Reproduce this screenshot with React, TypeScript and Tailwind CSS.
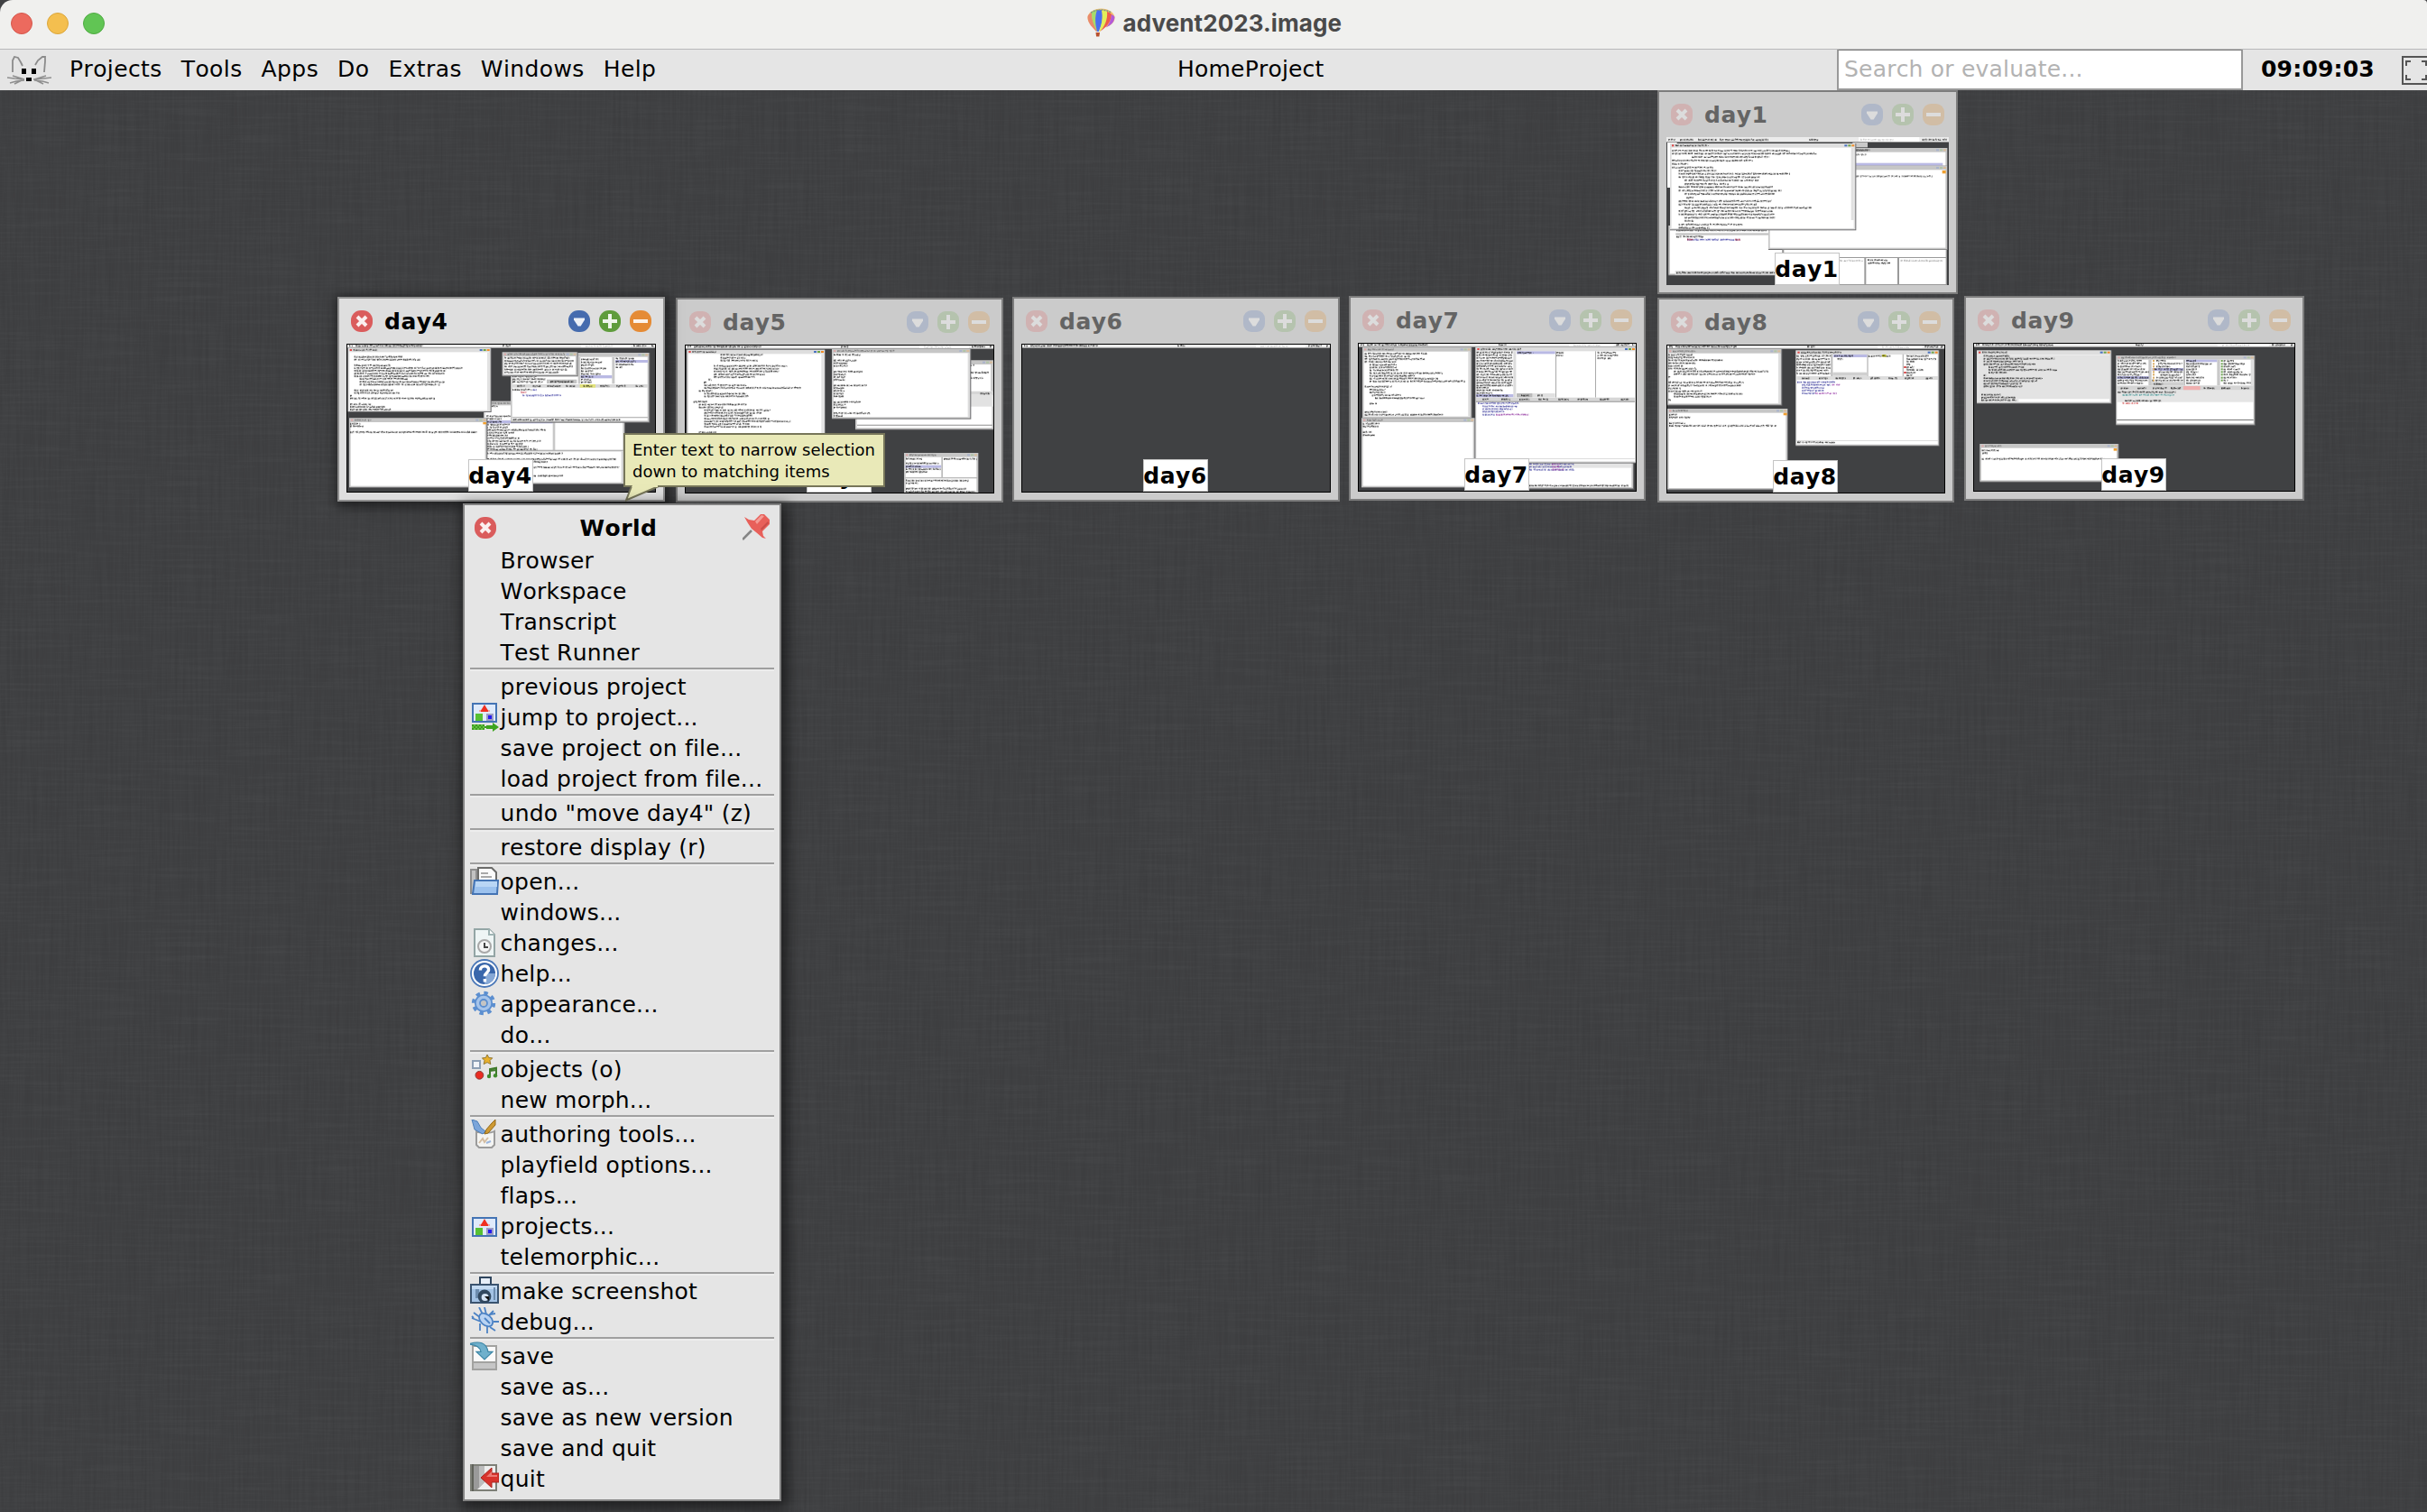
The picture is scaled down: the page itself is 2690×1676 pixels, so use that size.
import React from "react";

type Seg = [number, number, number];

/* Splits a row of tiny unreadable text into irregular strokes */
function strokes(x: number, y: number, w: number, seed: number, max: number, gap: number, jitter: number) {
  let s = (seed * 7919 + 13) % 65521;
  const next = () => {
    s = (s * 171 + 11213) % 65521;
    return s / 65521;
  };
  let d = "";
  let p = x;
  while (p < x + w) {
    const len = Math.min(2 + next() * max, x + w - p);
    d += `M${p.toFixed(1)} ${(y + (next() - 0.5) * jitter).toFixed(1)}h${len.toFixed(1)}`;
    p += len + 1 + next() * gap;
  }
  return d;
}

function Text({ rows, c = "#111" }: { rows: Seg[]; c?: string }) {
  return (
    <g stroke={c} fill="none">
      {rows.map(([x, y, w], i) => {
        const seed = Math.round(x * 3 + y * 7 + w + i);
        return (
          <g key={i}>
            <path d={strokes(x, y, w, seed, 14, 5, 1)} strokeWidth={7} opacity={0.2} />
            <path d={strokes(x, y, w, seed + 5, 7, 6, 3)} strokeWidth={3} opacity={0.62} />
            <path d={strokes(x, y, w, seed + 9, 2, 11, 5)} strokeWidth={4} opacity={0.5} />
          </g>
        );
      })}
    </g>
  );
}

function R({ b, f }: { b: [number, number, number, number]; f: string }) {
  return <rect x={b[0]} y={b[1]} width={b[2]} height={b[3]} fill={f} />;
}

function Mini({ b, on, title = 80, side = 5 }: { b: [number, number, number, number]; on?: boolean; title?: number; side?: number }) {
  const [x, y, w, h] = b;
  return (
    <g>
      <R b={[x, y, w + 3, h + 3]} f="#6d6d6f" />
      <R b={[x, y, w, h]} f={on ? "#dedede" : "#c6c6c6"} />
      <R b={[x + side, y + 14, w - side * 2, h - 18]} f="#fff" />
      <R b={[x + 6, y + 4, 7, 6]} f={on ? "#e04848" : "#dba9a9"} />
      <Text rows={[[x + 18, y + 7, title]]} c={on ? "#222" : "#666"} />
      <R b={[x + w - 36, y + 4, 9, 6]} f={on ? "#4a73c0" : "#aab4cc"} />
      <R b={[x + w - 24, y + 4, 9, 6]} f={on ? "#6da548" : "#b0c4a6"} />
      <R b={[x + w - 12, y + 4, 9, 6]} f={on ? "#f08c28" : "#d8bd9c"} />
    </g>
  );
}

function Bar({ x, y, w }: { x: number; y: number; w: number }) {
  return (
    <g>
      <R b={[x, y, w, 9]} f="#ececec" />
      <R b={[x, y + 9, w, 3]} f="#9a9a9a" />
      <R b={[x + w * 0.76, y, w * 0.16, 9]} f="#fff" />
      <Text rows={[[x + 6, y + 4, 12], [x + 28, y + 4, w * 0.22], [x + w * 0.505, y + 4, 26]]} />
      <Text rows={[[x + w * 0.775, y + 5, 90]]} c="#bbb" />
      <Text rows={[[x + w * 0.93, y + 4, 44], [x + w - 12, y + 4, 8]]} />
    </g>
  );
}

function Day4() {
  return (
    <svg className="block size-full" viewBox="75 186 1023 489" preserveAspectRatio="none">
      <Bar x={75} y={186} w={1023} />
      <Mini b={[528, 374, 468, 274]} />
      <R b={[530, 436, 236, 102]} f="#fff" />
      <R b={[536, 438, 222, 10]} f="#b9b9e4" />
      <R b={[758, 444, 8, 94]} f="#c8c8c8" />
      <R b={[532, 536, 462, 5]} f="#b4b4b4" />
      <R b={[986, 541, 8, 106]} f="#d4d4d4" />
      <Text rows={[[545, 391, 30], [538, 424, 80], [538, 433, 50], [538, 443, 50], [538, 452, 76], [538, 461, 70], [538, 470, 196], [538, 479, 92], [538, 488, 70], [538, 497, 110], [538, 507, 180], [538, 516, 120], [538, 525, 140], [538, 534, 170], [540, 548, 252], [540, 567, 430], [690, 576, 50], [695, 594, 284], [695, 622, 100]]} />
      <Mini b={[618, 213, 460, 230]} title={180} />
      <R b={[624, 318, 450, 11]} f="#d8d8d8" />
      <R b={[848, 318, 52, 11]} f="#e2e27a" />
      <R b={[850, 288, 106, 10]} f="#b9b9e4" />
      <R b={[966, 237, 108, 9]} f="#b9b9e4" />
      <R b={[955, 228, 9, 88]} f="#c9c9c9" />
      <R b={[842, 228, 8, 88]} f="#c9c9c9" />
      <R b={[738, 302, 100, 13]} f="#c4c4c4" />
      <R b={[624, 426, 450, 4]} f="#bbb" />
      <Text rows={[[852, 235, 60], [852, 245, 70], [852, 254, 44], [852, 265, 86], [852, 274, 40], [852, 284, 66], [852, 293, 40], [852, 303, 34], [852, 311, 36], [968, 232, 60], [968, 242, 66], [968, 252, 60], [968, 261, 22], [624, 292, 80], [624, 301, 110], [624, 310, 100], [640, 324, 24], [692, 324, 26], [740, 324, 44], [802, 324, 30], [860, 324, 30], [916, 324, 30], [970, 324, 30], [1034, 324, 28], [624, 336, 64], [626, 436, 356], [750, 309, 76]]} />
      <Text rows={[[652, 345, 18]]} c="#c03040" />
      <Text rows={[[692, 336, 12], [658, 355, 128]]} c="#3838a0" />
      <Mini b={[590, 211, 249, 78]} title={190} />
      <Text rows={[[598, 230, 216], [598, 240, 230], [598, 249, 222], [598, 259, 226], [598, 269, 210], [598, 278, 180]]} />
      <Mini b={[77, 197, 474, 211]} on />
      <R b={[540, 212, 9, 194]} f="#e2e2e2" />
      <Text rows={[[98, 227, 160], [98, 236, 220], [98, 255, 120], [98, 264, 360], [98, 273, 306], [98, 282, 300], [98, 291, 250], [116, 300, 160], [116, 310, 282], [116, 319, 266], [98, 338, 130], [98, 347, 150], [84, 356, 6], [84, 365, 282], [84, 384, 70], [84, 393, 116], [84, 402, 136]]} />
      <Mini b={[81, 430, 457, 230]} title={55} />
      <R b={[526, 444, 11, 7]} f="#f0a030" />
      <Text rows={[[84, 449, 34], [84, 458, 44], [84, 477, 422]]} />
    </svg>
  );
}

function Day5() {
  return (
    <svg className="block size-full" viewBox="90 189 1023 489" preserveAspectRatio="none">
      <Bar x={90} y={189} w={1023} />
      <Mini b={[654, 238, 459, 229]} title={150} />
      <R b={[1036, 341, 77, 12]} f="#d6d6d6" />
      <R b={[1036, 353, 77, 39]} f="#e2e2e2" />
      <R b={[660, 452, 450, 4]} f="#aaa" />
      <R b={[1104, 252, 6, 88]} f="#ccc" />
      <Text rows={[[1036, 255, 14], [1038, 279, 60], [1036, 297, 42], [1070, 349, 30]]} />
      <Mini b={[576, 200, 460, 231]} title={190} />
      <R b={[1028, 214, 7, 214]} f="#dcdcdc" />
      <Text rows={[[582, 220, 90], [582, 239, 76], [582, 248, 46], [582, 257, 46], [582, 276, 96], [582, 285, 40], [582, 294, 38], [582, 303, 38], [582, 322, 110], [582, 331, 36], [582, 340, 36], [582, 349, 34], [582, 358, 34], [582, 377, 90], [582, 386, 40], [582, 395, 44], [582, 414, 122], [582, 423, 30]]} />
      <Mini b={[94, 203, 458, 330]} on />
      <R b={[541, 217, 8, 270]} f="#e4e4e4" />
      <Text rows={[[206, 220, 140], [206, 230, 84], [206, 239, 124], [184, 257, 244], [184, 266, 216], [184, 275, 216], [184, 285, 170], [184, 294, 136], [166, 303, 10], [150, 312, 8], [152, 321, 140], [152, 330, 322], [134, 340, 44], [152, 349, 140], [152, 358, 148], [116, 376, 46], [134, 385, 158], [134, 395, 80], [152, 404, 220], [152, 413, 190], [152, 422, 160], [152, 432, 216], [152, 441, 288], [152, 450, 150], [152, 459, 190], [134, 478, 58]]} />
      <R b={[88, 530, 480, 150]} f="#404143" />
      <Mini b={[816, 546, 246, 132]} title={90} />
      <R b={[820, 587, 120, 9]} f="#b9b9e4" />
      <R b={[940, 560, 5, 68]} f="#bbb" />
      <R b={[820, 627, 240, 4]} f="#bbb" />
      <Text rows={[[822, 566, 54], [948, 566, 110], [822, 581, 110], [822, 591, 50], [822, 600, 116], [822, 609, 72], [822, 638, 210], [822, 647, 40], [822, 665, 200], [822, 675, 230]]} />
    </svg>
  );
}

function Day6() {
  return (
    <svg className="block size-full" viewBox="69 186 1023 489" preserveAspectRatio="none">
      <Bar x={69} y={186} w={1023} />
    </svg>
  );
}

function Day7() {
  return (
    <svg className="block size-full" viewBox="78 183 921 489" preserveAspectRatio="none">
      <Bar x={78} y={183} w={921} />
      <Mini b={[560, 560, 430, 104]} />
      <R b={[640, 582, 344, 14]} f="#e4e4e4" />
      <Text rows={[[645, 583, 150], [645, 592, 140], [645, 602, 150]]} c="#38389a" />
      <Text rows={[[720, 583, 26], [722, 592, 24], [722, 602, 38]]} c="#a030a0" />
      <Text rows={[[645, 655, 330]]} />
      <Mini b={[90, 195, 362, 234]} title={86} />
      <R b={[442, 210, 8, 214]} f="#dadada" />
      <Text rows={[[98, 216, 208], [98, 225, 150], [98, 234, 200], [98, 243, 106], [114, 253, 90], [114, 262, 90], [114, 271, 94], [114, 281, 242], [114, 290, 150], [114, 299, 228], [114, 308, 318], [98, 326, 90], [114, 336, 54], [114, 345, 52], [122, 354, 96], [132, 364, 164], [114, 382, 24], [98, 410, 74], [98, 419, 260]]} />
      <Mini b={[87, 430, 376, 230]} title={52} />
      <Text rows={[[92, 449, 54], [92, 458, 52], [92, 477, 30], [92, 487, 40]]} />
      <Mini b={[466, 194, 533, 384]} on title={134} side={3} />
      <R b={[592, 208, 9, 154]} f="#dcdcdc" />
      <R b={[732, 208, 3, 154]} f="#aaa" />
      <R b={[864, 208, 3, 154]} f="#aaa" />
      <R b={[603, 208, 128, 9]} f="#b9b9e4" />
      <R b={[468, 351, 124, 10]} f="#b9b9e4" />
      <R b={[603, 348, 128, 13]} f="#e0e0e0" />
      <R b={[603, 348, 52, 13]} f="#b9b9b9" />
      <R b={[468, 362, 528, 12]} f="#d6d6d6" />
      <R b={[468, 374, 528, 3]} f="#888" />
      <R b={[468, 564, 528, 3]} f="#ddd" />
      <Text rows={[212, 221, 230, 240, 249, 258, 267, 276, 286, 295, 304, 313, 322].map((y, i) => [470, y, i % 3 ? 118 : 121] as Seg)} />
      <Text rows={[[470, 329, 40], [470, 338, 86], [470, 347, 52], [470, 356, 106], [606, 213, 52], [736, 213, 24], [736, 222, 22], [872, 213, 62], [872, 222, 68], [872, 232, 46], [618, 355, 26], [672, 355, 18], [490, 368, 20], [552, 368, 30], [612, 368, 34], [676, 368, 34], [742, 368, 34], [806, 368, 34], [880, 368, 30], [950, 368, 26]]} />
      <Text rows={[[474, 381, 136], [490, 391, 114], [490, 400, 100], [490, 409, 74], [490, 419, 40]]} c="#303098" />
      <Text rows={[[534, 419, 110]]} c="#8c2a9c" />
    </svg>
  );
}

function Day1() {
  return (
    <svg className="block size-full" viewBox="81 186 939 492" preserveAspectRatio="none">
      <R b={[81, 186, 939, 15]} f="#ececec" />
      <R b={[81, 201, 939, 3]} f="#909090" />
      <R b={[720, 186, 202, 15]} f="#fff" />
      <Text rows={[[88, 195, 22], [126, 195, 44], [186, 195, 62], [258, 195, 162], [556, 195, 30], [932, 195, 62], [1000, 195, 14]]} />
      <Text rows={[[726, 195, 110]]} c="#bbb" />
      <R b={[84, 204, 32, 150]} f="#fff" />
      <R b={[700, 204, 50, 16]} f="#c9c9c9" />
      <Mini b={[680, 222, 334, 90]} title={60} />
      <R b={[700, 272, 300, 9]} f="#b9b9e4" />
      <Mini b={[88, 480, 382, 164]} />
      <R b={[112, 505, 320, 7]} f="#c4c4c4" />
      <R b={[110, 630, 350, 14]} f="#ddd" />
      <Text rows={[[114, 496, 300], [114, 517, 90], [114, 637, 330]]} />
      <Text rows={[[150, 527, 176]]} c="#2a2a9c" />
      <Text rows={[[150, 527, 20], [310, 527, 16]]} c="#b02030" />
      <Mini b={[420, 281, 594, 277]} />
      <R b={[998, 297, 12, 10]} f="#f0a030" />
      <Text rows={[[712, 316, 254], [710, 230, 40], [712, 244, 34]]} c="#333" />
      <R b={[466, 559, 548, 119]} f="#9a9a9a" />
      <R b={[472, 561, 538, 24]} f="#fff" />
      <R b={[472, 588, 267, 87]} f="#fff" />
      <R b={[745, 588, 104, 87]} f="#fff" />
      <R b={[855, 588, 155, 87]} f="#fff" />
      <Text rows={[[750, 595, 68], [752, 605, 76]]} />
      <Text rows={[[658, 597, 76], [860, 597, 140]]} c="#999" />
      <Mini b={[93, 207, 616, 286]} on title={110} />
      <R b={[695, 222, 9, 240]} f="#e0e0e0" />
      <Text rows={[[100, 231, 390], [100, 241, 480], [166, 252, 258], [100, 264, 268], [100, 275, 54], [100, 287, 138], [122, 298, 126], [122, 308, 370], [122, 319, 270], [142, 330, 246], [142, 342, 146], [122, 352, 312], [122, 364, 342], [142, 375, 300], [148, 387, 24], [122, 399, 310], [122, 410, 260], [142, 421, 422], [122, 432, 312], [122, 443, 318], [142, 454, 300], [142, 465, 30], [122, 477, 212], [122, 488, 102]]} />
    </svg>
  );
}

function Day8() {
  return (
    <svg className="block size-full" viewBox="84 879 921 489" preserveAspectRatio="none">
      <Bar x={84} y={879} w={921} />
      <Mini b={[84, 891, 379, 185]} title={76} />
      <R b={[453, 906, 8, 166]} f="#dedede" />
      <Text rows={[[88, 910, 80], [88, 919, 86], [88, 928, 180], [88, 938, 90], [88, 947, 50], [88, 956, 94], [106, 965, 314], [106, 974, 270], [88, 984, 8], [88, 1002, 250], [88, 1012, 240], [88, 1022, 40], [88, 1031, 112], [106, 1040, 228], [106, 1049, 124], [88, 1060, 8]]} />
      <Mini b={[84, 1089, 399, 268]} title={50} />
      <R b={[470, 1103, 12, 8]} f="#f0a030" />
      <Text rows={[[90, 1109, 26], [90, 1118, 70], [90, 1137, 54], [90, 1146, 356]]} />
      <Mini b={[511, 895, 475, 316]} on title={134} side={3} />
      <R b={[628, 908, 6, 74]} f="#bbb" />
      <R b={[748, 908, 4, 74]} f="#bbb" />
      <R b={[866, 908, 4, 74]} f="#bbb" />
      <R b={[636, 909, 112, 9]} f="#b9b9e4" />
      <R b={[634, 968, 114, 12]} f="#d0d0d0" />
      <R b={[798, 909, 14, 8]} f="#e2e240" />
      <R b={[514, 981, 470, 12]} f="#dcdcdc" />
      <R b={[514, 1194, 470, 3]} f="#ddd" />
      <Text rows={[[514, 914, 114], [514, 924, 110], [514, 934, 112], [514, 943, 114], [514, 953, 112], [514, 962, 106], [514, 972, 112], [640, 914, 62], [650, 924, 18], [752, 914, 74], [880, 914, 74], [880, 924, 98], [880, 933, 26], [880, 942, 12], [880, 951, 24], [880, 960, 56], [880, 969, 30], [880, 978, 18], [532, 988, 24], [588, 988, 30], [644, 988, 34], [702, 988, 28], [760, 988, 30], [820, 988, 28], [874, 988, 30], [944, 988, 22], [516, 1201, 126]]} />
      <Text rows={[[516, 1001, 126], [532, 1010, 96], [532, 1020, 76], [532, 1029, 72], [532, 1038, 44]]} c="#303098" />
      <Text rows={[[632, 1010, 26], [576, 1038, 72]]} c="#9a3aa8" />
      <R b={[871, 948, 7, 6]} f="#d03a3a" />
      <R b={[871, 966, 7, 6]} f="#d03a3a" />
    </svg>
  );
}

function Day9() {
  return (
    <svg className="block size-full" viewBox="84 183 1065 489" preserveAspectRatio="none">
      <Bar x={84} y={183} w={1065} />
      <Mini b={[93, 205, 446, 175]} on title={84} />
      <R b={[98, 220, 436, 147]} f="#e3e3e3" />
      <R b={[98, 367, 134, 10]} f="#e3e3e3" />
      <Text rows={[[116, 224, 88], [116, 233, 236], [116, 242, 130], [116, 251, 172], [132, 261, 118], [132, 270, 228], [132, 279, 62], [116, 288, 8], [116, 298, 196], [116, 307, 180], [116, 316, 126], [116, 325, 128], [108, 353, 64], [108, 362, 114], [108, 371, 116]]} />
      <Mini b={[556, 222, 460, 230]} title={180} side={3} />
      <R b={[664, 236, 10, 86]} f="#c8c8c8" />
      <R b={[780, 236, 6, 86]} f="#bbb" />
      <R b={[892, 236, 10, 86]} f="#c8c8c8" />
      <R b={[1004, 236, 8, 86]} f="#dcdcdc" />
      <R b={[788, 236, 104, 8]} f="#b9b9e4" />
      <R b={[676, 264, 104, 9]} f="#b9b9e4" />
      <R b={[559, 291, 106, 9]} f="#b9b9e4" />
      <R b={[672, 310, 112, 12]} f="#cfcfcf" />
      <R b={[559, 322, 454, 16]} f="#d4d4d4" />
      <R b={[780, 324, 56, 13]} f="#efb0b0" />
      <R b={[559, 338, 454, 39]} f="#e5e5e5" />
      <R b={[559, 435, 454, 3]} f="#777" />
      <Text rows={[[562, 240, 80], [562, 249, 94], [562, 259, 80], [562, 268, 90], [562, 277, 104], [562, 286, 78], [562, 296, 104], [562, 305, 100], [562, 314, 84], [690, 240, 32], [696, 249, 80], [690, 259, 46], [684, 268, 94], [698, 277, 80], [704, 287, 66], [690, 296, 86], [676, 305, 102], [682, 317, 30], [790, 240, 32], [790, 250, 84], [790, 259, 44], [790, 268, 34], [790, 277, 40], [790, 286, 32], [790, 296, 58], [790, 305, 46], [790, 314, 44], [914, 240, 34], [914, 250, 70], [914, 259, 40], [914, 268, 54], [914, 277, 62], [914, 286, 90], [914, 296, 44], [914, 305, 14], [914, 314, 90], [572, 331, 26], [628, 331, 28], [678, 331, 46], [738, 331, 34], [848, 331, 36], [906, 331, 30], [972, 331, 26], [562, 344, 192], [586, 373, 120]]} />
      <Text rows={[[578, 353, 172]]} c="#2a8a8a" />
      <Text rows={[[578, 381, 52]]} c="#c82828" />
      {[240, 250, 259, 268, 277, 286, 296, 305].map((y) => (
        <React.Fragment key={y}>
          <R b={[905, y - 3, 6, 6]} f="#6ba050" />
          <R b={[678, y - 3, 6, 6]} f="#dcae66" />
        </React.Fragment>
      ))}
      <Mini b={[103, 516, 460, 125]} title={54} />
      <R b={[548, 531, 11, 8]} f="#f0a030" />
      <Text rows={[[110, 538, 56], [112, 547, 16], [110, 566, 408]]} />
    </svg>
  );
}

/* Title bar buttons */
const BTN = {
  close: ["bg-[#da5c5c]", "bg-[#d0b2b2]"],
  menu: ["bg-[#456bae]", "bg-[#b0b8c8]"],
  grow: ["bg-[#5f9c3c]", "bg-[#b5c3ae]"],
  shrink: ["bg-[#e58b35]", "bg-[#d1bda5]"],
};

function Btn({ kind, on }: { kind: keyof typeof BTN; on?: boolean }) {
  return (
    <span className={`flex size-6 shrink-0 items-center justify-center ${on ? "rounded-[11px]" : "rounded-[9px]"} ${BTN[kind][on ? 0 : 1]}`}>
      <svg className="size-6" viewBox="0 0 24 24" stroke={on ? "#fff" : "#dcdcdc"} fill="none" strokeWidth={4} opacity={on ? 0.9 : 1}>
        {kind === "close" && <path d="M7 7l10 10M17 7L7 17" />}
        {kind === "menu" && <path d="M6 8.6h12v2L13.6 17.5h-3L6 10.6z" fill={on ? "#fff" : "#dcdcdc"} stroke="none" />}
        {kind === "grow" && <path d="M12 4v16M4 12h16" />}
        {kind === "shrink" && <path d="M4 12h16" />}
      </svg>
    </span>
  );
}

function Project({ name, place, on, frame = true, children }: { name: string; place: string; on?: boolean; frame?: boolean; children: React.ReactNode }) {
  return (
    <section
      className={`absolute flex flex-col border-2 px-2 pb-2 ${place} ${on ? "border-[#919191] bg-[#dedede] shadow-[2px_3px_12px_3px_rgba(0,0,0,0.5)]" : "border-[#7d7d7d] bg-[#cbcbcb]"}`}
    >
      <header className="flex h-[50px] shrink-0 items-center gap-[10px] px-[5px]">
        <Btn kind="close" on={on} />
        <h2 className={`ml-[3px] flex-1 pt-px text-[25px] font-bold tracking-[0.5px] ${on ? "text-black" : "text-[#646464]"}`}>{name}</h2>
        <Btn kind="menu" on={on} />
        <Btn kind="grow" on={on} />
        <Btn kind="shrink" on={on} />
      </header>
      <div className={`relative min-h-0 flex-1 bg-[#404143] ${frame ? "border border-black" : ""}`}>
        {children}
        <span className="absolute bottom-0 left-1/2 -ml-px flex h-9 w-[72px] -translate-x-1/2 items-center justify-center border border-[#c4c4c4] bg-white pt-px text-[25px] font-bold tracking-[0.5px] text-black">
          {name}
        </span>
      </div>
    </section>
  );
}

/* World menu icons, drawn on a 16 unit grid */
function Scene({ y }: { y: number }) {
  return (
    <g transform={`translate(0 ${y})`}>
      <rect x="1.5" y="0.5" width="13" height="10" fill="#dfeafa" stroke="#4474b4" />
      <path d="M8 1l1.2 2 1.3 2h-5l1.3-2z" fill="#f03020" />
      <path d="M5 4h1v1H5zM10 4h1v1h-1z" fill="#f0a8a8" />
      <path d="M3 6h4v4H3z" fill="#56c033" />
      <path d="M9 6h4v4H9z" fill="#9c9cc4" />
      <path d="M10 7h2v2h-2z" fill="#2418f0" />
    </g>
  );
}

const ICONS: Record<string, React.ReactNode> = {
  jump: (
    <>
      <Scene y={0} />
      <path d="M1 12h7v3H1z" fill="#62c342" />
      <path d="M1 12.500h7M2 13.500h7M1 14.500h7" stroke="#3f9a22" strokeDasharray="1 1" />
      <path d="M9 12.500h3.500V11l3.500 2.500-3.500 2.500V14.500H9z" fill="#3ea51f" />
    </>
  ),
  projects: <Scene y={3} />,
  open: (
    <>
      <path d="M0 1h4v14H0z" fill="#8e8e8e" />
      <path d="M1 2h2v12H1z" fill="#c2c2c2" />
      <path d="M4.500 7V.5H12l2.500 2.500V7" fill="#fbfbfb" stroke="#6c6c6a" />
      <path d="M6 3.500h4M6 5.500h6" stroke="#a9a9a9" />
      <path d="M2.500 7.500h13l-.5 7.500H1.500z" fill="#9cc2ee" stroke="#4474b4" />
      <path d="M3 8h12v3H3z" fill="#b9d6f5" />
    </>
  ),
  changes: (
    <>
      <path d="M2.500.5h8l3 3v12h-11z" fill="#eef5f5" stroke="#93a5a5" />
      <path d="M10.500.5v3h3" fill="#fff" stroke="#9fb4b4" />
      <circle cx="8" cy="10" r="3.500" fill="#f4f4f4" stroke="#a8a8a8" />
      <path d="M8 8v2.500h2" fill="none" stroke="#444" />
    </>
  ),
  help: (
    <>
      <circle cx="8" cy="8" r="7.500" fill="#fff" stroke="#4b78b8" strokeWidth="0.9" />
      <circle cx="8" cy="8" r="6" fill="#3a67ab" />
      <path d="M8 14a6 6 0 0 0 6-6H9z" fill="#86a8d6" />
      <path d="M5.700 6.200C5.700 3.200 10.500 3.300 10.300 6 10.200 7.600 8.200 7.800 8.200 9.600M8.200 11v1.800" fill="none" stroke="#fff" strokeWidth="1.700" />
    </>
  ),
  appearance: (
    <>
      <circle cx="7.500" cy="7.500" r="5.600" fill="none" stroke="#5c8fd0" strokeWidth="2" strokeDasharray="2.200 2.200" />
      <circle cx="7.500" cy="7.500" r="4.600" fill="#a6c4ea" stroke="#5c8fd0" strokeWidth="0.900" />
      <circle cx="7.500" cy="7.500" r="2" fill="#c4c4c4" stroke="#5c8fd0" strokeWidth="0.900" />
    </>
  ),
  objects: (
    <>
      <rect x="1.500" y="3.500" width="4" height="4" fill="#f1f4f8" stroke="#8d9fb4" />
      <path d="M9.500 0l.9 1.700 2 .2-1.400 1.400.4 2-1.900-1-1.900 1 .4-2L6.700 1.900l2-.2z" fill="#e8b02c" stroke="#7f6420" strokeWidth="0.400" />
      <circle cx="5.200" cy="11.400" r="2.200" fill="#ea2c22" stroke="#8c3a34" strokeWidth="0.500" />
      <path d="M11 12V8l3.500-.6V11.500M11 9l3.500-.5" fill="none" stroke="#3f7a2c" />
      <circle cx="10.500" cy="12" r="1.100" fill="#3f8a2c" />
      <circle cx="14" cy="11.600" r="1.100" fill="#3f8a2c" />
    </>
  ),
  authoring: (
    <>
      <path d="M3.500 6.500c1.500 1.200 8 1.200 10 0v7.500l-1.500 1.500H5L3.500 14z" fill="#f4f4f2" stroke="#9b9b9b" />
      <path d="M1 0l3 1 2 3.500 2.500 2L7 8 2.500 5.500z" fill="#7ba5da" stroke="#4f7fb8" strokeWidth="0.500" />
      <path d="M14 0v3l-4 4.500-2 .5 1-2.500L12 2z" fill="#cf9a33" stroke="#936a1a" strokeWidth="0.500" />
      <path d="M5 13l2-2.500 1 2 2-2.500" fill="none" stroke="#d3bda2" />
      <path d="M9 13l2.500-1" stroke="#9bb5dc" />
    </>
  ),
  screenshot: (
    <>
      <path d="M5.500 4.500v-4h6v4" fill="#e6eef8" stroke="#2f455e" />
      <path d="M.5 4.500h15v10H.5z" fill="#a3c2e4" stroke="#3a536f" />
      <path d="M1 5h14v2H1z" fill="#c3daf2" />
      <path d="M3 7h2v5H3zM13 6h1v7h-1z" fill="#6c8cae" />
      <circle cx="8" cy="11" r="3.700" fill="#31485f" />
      <circle cx="8.300" cy="11.500" r="2" fill="#d5e4f5" />
      <path d="M8 11h2.500v2.500z" fill="#111" />
    </>
  ),
  debug: (
    <>
      <path d="M2 3l4 3M5 0l2 4M8 0l1 4M1 6l5 2M13 2l-3 3M13 8h3M5.500 9v4M9.500 10v4.500M1 5l1 1M11 4l3-.5M11 11l3 2" fill="none" stroke="#4c82c4" strokeWidth="0.900" />
      <ellipse cx="8.800" cy="7" rx="4.400" ry="2.900" transform="rotate(42 8.800 7)" fill="#b9d3f3" stroke="#4c82c4" strokeWidth="0.900" />
      <path d="M8 6l3 3" stroke="#4c82c4" strokeWidth="0.900" />
    </>
  ),
  save: (
    <>
      <path d="M1.500 2.500h13v13h-13z" fill="#fafafa" stroke="#a2a2a0" />
      <path d="M1 11h14v5H1z" fill="#a2a2a0" />
      <path d="M2 12h12v3H2z" fill="#c6c6c6" />
      <path d="M0 1.200c5-1.500 9-.8 10 4.500h2.500L8 10 3.500 5.700H6C5.500 3 3.500 2 0 1.600z" fill="#6fb0cc" stroke="#3c86a6" strokeWidth="0.600" />
    </>
  ),
  quit: (
    <>
      <path d="M.5.5h14v14H.5z" fill="#eee" stroke="#7d7f77" />
      <path d="M1 0h1v15H1z" fill="#60625a" />
      <path d="M2 1h6v9l-4 4H2z" fill="#9a9a9a" />
      <path d="M5 1h3v9l-3 3z" fill="#bdbdbd" />
      <path d="M6 7.500L12 2v3h4v5h-4v3z" fill="#d8332c" stroke="#a92520" strokeWidth="0.500" />
      <path d="M9 7l3-3v2h3v1z" fill="#ec7a74" />
    </>
  ),
};

const MENU: [string, string?][][] = [
  [["Browser"], ["Workspace"], ["Transcript"], ["Test Runner"]],
  [["previous project"], ["jump to project...", "jump"], ["save project on file..."], ["load project from file..."]],
  [['undo "move day4" (z)']],
  [["restore display (r)"]],
  [["open...", "open"], ["windows..."], ["changes...", "changes"], ["help...", "help"], ["appearance...", "appearance"], ["do..."]],
  [["objects (o)", "objects"], ["new morph..."]],
  [["authoring tools...", "authoring"], ["playfield options..."], ["flaps..."], ["projects...", "projects"], ["telemorphic..."]],
  [["make screenshot", "screenshot"], ["debug...", "debug"]],
  [["save", "save"], ["save as..."], ["save as new version"], ["save and quit"], ["quit", "quit"]],
];

function WorldMenu() {
  return (
    <nav className="absolute left-[513px] top-[458px] h-[1106px] w-[353px] border-2 border-[#838383] bg-[#e5e5e5] px-[6px] shadow-[3px_4px_14px_4px_rgba(0,0,0,0.5)]">
      <header className="flex h-11 items-center justify-between px-[5px] pt-[6px]">
        <Btn kind="close" on />
        <h1 className="-ml-[2px] text-[25px] font-bold leading-none tracking-[0.5px] text-black">World</h1>
        <svg className="-mt-[3px] size-[30px]" viewBox="0 0 30 30">
          <path d="M0 29l10-10" stroke="#858585" strokeWidth="2.600" />
          <path d="M2 4l5 3 6 1 7-7 4 0 6 6v5l-8 8 1 5 3 3-4-1-7-6-5-4-4-6z" fill="#e8605a" />
          <path d="M14 9l7-7 3 1-8 9z" fill="#f49c96" />
          <path d="M20 17l8-8 1 2-8 8z" fill="#c94d49" />
        </svg>
      </header>
      {MENU.map((group, i) => (
        <React.Fragment key={i}>
          {i > 0 && <hr className="h-1 border-0 border-t-2 border-t-[#9f9f9f] bg-[#ededed] bg-clip-padding" />}
          <ul>
            {group.map(([label, icon]) => (
              <li key={label} className="flex h-[34px] items-center">
                <span className="size-8 shrink-0">
                  {icon && (
                    <svg className="size-8" viewBox="0 0 16 16">
                      {ICONS[icon]}
                    </svg>
                  )}
                </span>
                <span className="ml-[1.6px] mt-px whitespace-pre text-[25px] leading-[34px] tracking-[0.22px] text-black">{label}</span>
              </li>
            ))}
          </ul>
        </React.Fragment>
      ))}
    </nav>
  );
}

function Balloon() {
  return (
    <svg className="h-8 w-[31px]" viewBox="0 0 31 32">
      <ellipse cx="15.500" cy="11" rx="15" ry="10.500" fill="#f0c070" />
      <path d="M.5 10C1 18 6 21 10 26h3C8 20 5 14 5 5 2 6 .5 8 .5 10z" fill="#e98b6c" />
      <path d="M5 5c0 9 3 15 6 21h1C9 18 8 10 11 2 8 2 6 3 5 5z" fill="#a6dc6a" />
      <path d="M11 2c-3 8-2 16 0 24h2c3-8 5-16 3-24z" fill="#4a6ff0" />
      <path d="M16 2c2 8 0 17-3 24h1c5-5 9-12 8-22-2-1.500-4-2-6-2z" fill="#e2ee5a" />
      <path d="M22 4c1 9-3 17-8 22 6-4 12-9 13-19-1.500-2-3-2.500-5-3z" fill="#ee5a4c" />
      <path d="M27 7c-1 7-3 12-7 15 6-3 10-6 10.500-12-.5-1.500-2-2.500-3.500-3z" fill="#b45ad8" />
      <path d="M4 5Q15-1 27 5" fill="none" stroke="#7f9a86" strokeWidth="1.500" strokeDasharray="2 1" />
      <path d="M9.500 27h4.500l-.6 4.500h-3.300z" fill="#b8502e" />
    </svg>
  );
}

function Mouse() {
  return (
    <svg className="h-8 w-[49px] shrink-0" viewBox="0 0 49 32" fill="none">
      <path d="M6 18V5l2-4 4 1 3 5 2 4M31 10l3-5 5-4h3v5l-1 12" stroke="#8b8b8b" strokeWidth="1.800" />
      <path d="M0 24l8 1 11 1M3 30l7-2 9-1M6 22l13 4M8 31l8-4M49 24l-9 1-11 1M46 30l-7-2-9-1M43 22l-13 4M40 31l-8-4" stroke="#8f8f8f" strokeWidth="1.700" />
      <path d="M16 14h5v6h-5zM27 14h5v6h-5zM21 24h6v4h-6z" fill="#000" />
    </svg>
  );
}

export default function App() {
  return (
    <div className="relative flex h-[1676px] w-[2690px] flex-col overflow-hidden bg-[#404143] font-['DejaVu_Sans',sans-serif] [font-kerning:none]">
      <div className="flex h-[55px] shrink-0 items-center rounded-tl-[14px] rounded-tr-[4px] border-b border-[#b9b9b9] bg-[#f0f0ee] px-3">
        <div className="flex flex-1 gap-4 pb-[2px]">
          <span className="size-6 rounded-full border border-[#d5574c] bg-[#ec6a5e]" />
          <span className="size-6 rounded-full border border-[#dba63a] bg-[#f4bf4f]" />
          <span className="size-6 rounded-full border border-[#50ab43] bg-[#61c554]" />
        </div>
        <div className="flex items-center gap-[9px] pb-[5px] pl-[2px] font-['Inter','Liberation_Sans',sans-serif] text-[26px] font-bold text-[#4a4a4a]">
          <Balloon />
          <span className="w-[243px] whitespace-nowrap pt-[2px] tracking-[0.1px] [font-kerning:auto]">advent2023.image</span>
        </div>
        <div className="flex-1" />
      </div>
      <div className="flex h-[45px] shrink-0 items-center overflow-hidden bg-[#e5e5e5] pl-2 text-[25px] tracking-[0.2px] text-black">
        <Mouse />
        <ul className="ml-5 flex w-[1228px] shrink-0 gap-[21px] pb-[1px] tracking-[0.4px]">
          {["Projects", "Tools", "Apps", "Do", "Extras", "Windows", "Help"].map((m) => (
            <li key={m}>{m}</li>
          ))}
        </ul>
        <span className="w-[731px] shrink-0 pb-[1px]">HomeProject</span>
        <div className="-mt-px flex h-[46px] w-[450px] shrink-0 items-center border-2 border-[#999] border-t-[#777] bg-white pl-[6px] text-[#b3b3b3]">Search or evaluate...</div>
        <span className="ml-[20px] w-[156px] shrink-0 pb-[1px] font-bold">09:09:03</span>
        <svg className="h-8 w-10 shrink-0" viewBox="0 0 40 32" fill="none" stroke="#555" strokeWidth="2">
          <path d="M0 1h40M0 31h40M1 0v32" />
          <path d="M5 11V6h5M22 6h5v5M5 21v5h5M22 26h5v-5" />
        </svg>
      </div>
      <main className="relative flex-1">
        <svg className="absolute inset-0 size-full">
          <filter id="weft" x="0" y="0" width="100%" height="100%">
            <feTurbulence type="fractalNoise" baseFrequency="0.012 0.35" numOctaves="2" seed="4" />
            <feColorMatrix values="0 0 0 0 1  0 0 0 0 1  0 0 0 0 1  0.5 0 0 0 -0.2" />
          </filter>
          <filter id="warp" x="0" y="0" width="100%" height="100%">
            <feTurbulence type="fractalNoise" baseFrequency="0.35 0.012" numOctaves="2" seed="9" />
            <feColorMatrix values="0 0 0 0 0  0 0 0 0 0  0 0 0 0 0  0.8 0 0 0 -0.3" />
          </filter>
          <rect width="100%" height="100%" filter="url(#weft)" opacity="0.11" />
          <rect width="100%" height="100%" filter="url(#warp)" opacity="0.15" />
        </svg>
        <Project name="day1" place="left-[1837px] top-0 h-[226px] w-[333px]" frame={false}><Day1 /></Project>
        <Project name="day5" place="left-[749px] top-[230px] h-[227px] w-[363px]"><Day5 /></Project>
        <Project name="day6" place="left-[1122px] top-[229px] h-[227px] w-[363px]"><Day6 /></Project>
        <Project name="day7" place="left-[1495px] top-[228px] h-[227px] w-[329px]"><Day7 /></Project>
        <Project name="day8" place="left-[1837px] top-[230px] h-[227px] w-[329px]"><Day8 /></Project>
        <Project name="day9" place="left-[2177px] top-[228px] h-[227px] w-[377px]"><Day9 /></Project>
        <Project name="day4" place="left-[374px] top-[229px] h-[227px] w-[363px]" on><Day4 /></Project>
        <div className="absolute left-[691px] top-[380px] h-[60px] w-[290px] whitespace-nowrap border-2 border-[#77765a] bg-[#e9e9b8] pl-[8px] pt-[5px] text-[18px] leading-6 text-black">
          Enter text to narrow selection
          <br />
          down to matching items
          <svg className="absolute left-0 top-[56px] h-[19px] w-12" viewBox="0 0 48 19">
            <path d="M7 1L1 16.500 37 1" fill="#e9e9b8" stroke="#77765a" strokeWidth="2" />
            <path d="M8 0h28v2H7z" fill="#e9e9b8" />
          </svg>
        </div>
        <WorldMenu />
      </main>
    </div>
  );
}
